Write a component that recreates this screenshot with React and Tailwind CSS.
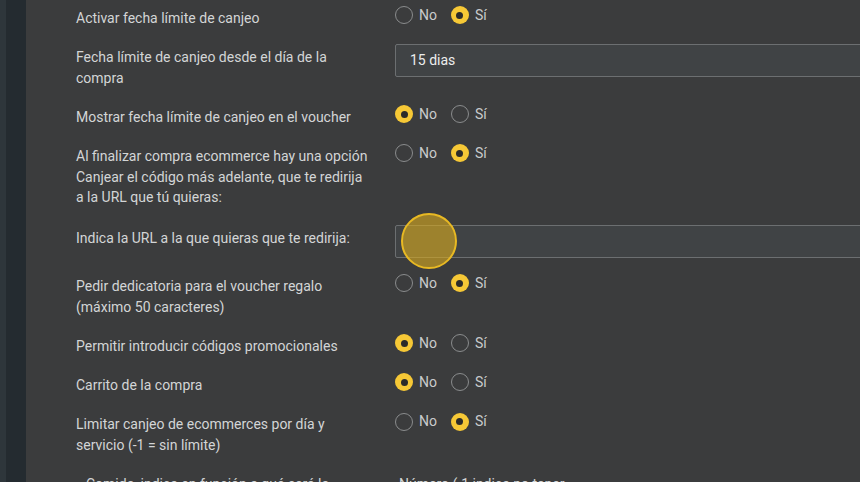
import React from "react";

function Radio({ checked }) {
  if (checked) {
    return (
      <span className="flex h-[18px] w-[18px] items-center justify-center rounded-full bg-[#f6c836]">
        <span className="h-[7px] w-[7px] rounded-full bg-[#2b2b2a]" />
      </span>
    );
  }
  return <span className="h-[18px] w-[18px] rounded-full border-[1.5px] border-[#8a8c8d]" />;
}

function YesNo({ value }) {
  return (
    <div className="flex h-[20.5px] items-center gap-[14px] text-[14px] text-[#c9cbcc]">
      <label className="flex items-center gap-[6px]">
        <Radio checked={value === "no"} />
        <span>No</span>
      </label>
      <label className="flex items-center gap-[6px]">
        <Radio checked={value === "si"} />
        <span>Sí</span>
      </label>
    </div>
  );
}

function TextInput({ value }) {
  return (
    <div className="flex h-[33px] w-[480px] items-center rounded-[2px] border border-[#6c6f71] bg-[#404345] px-[14px] text-[14px] text-[#eceded]">
      {value}
    </div>
  );
}

function Row({ label, children, className = "" }) {
  return (
    <div className={"flex items-start " + className}>
      <div className="relative top-[1px] w-[296px] shrink-0 pt-[2px] leading-[20.5px] text-[#d3d5d6]">{label}</div>
      <div className="ml-[23px] shrink-0">{children}</div>
    </div>
  );
}

const rows = [
  { label: "Activar fecha límite de canjeo", radio: "si" },
  { label: "Fecha límite de canjeo desde el día de la compra", input: "15 dias" },
  { label: "Mostrar fecha límite de canjeo en el voucher", radio: "no" },
  {
    label: "Al finalizar compra ecommerce hay una opción Canjear el código más adelante, que te redirija a la URL que tú quieras:",
    radio: "si",
  },
  { label: "Indica la URL a la que quieras que te redirija:", input: "", cls: "mt-[2px] mb-[-2px]" },
  { label: "Pedir dedicatoria para el voucher regalo (máximo 50 caracteres)", radio: "si" },
  { label: "Permitir introducir códigos promocionales", radio: "no" },
  { label: "Carrito de la compra", radio: "no" },
  { label: "Limitar canjeo de ecommerces por día y servicio (-1 = sin límite)", radio: "si" },
];

export default function App() {
  return (
    <div
      className="flex h-[482px] w-[860px] overflow-hidden bg-[#3b3c3d] text-[14px]"
      style={{ fontFamily: "Roboto, 'Liberation Sans', sans-serif" }}
    >
      <div className="w-[6px] shrink-0 bg-[#2e363b]" />
      <div className="w-[20px] shrink-0 bg-[#242b30]" />
      <div className="relative flex-1">
        <div className="flex flex-col gap-[16.75px] pl-[50px] pt-[4.75px]">
          {rows.map((r, i) => (
            <Row key={i} label={r.label} className={r.cls || ""}>
              {r.input !== undefined ? <TextInput value={r.input} /> : <YesNo value={r.radio} />}
            </Row>
          ))}
          <div className="flex items-start">
            <div className="relative top-[1px] w-[296px] shrink-0 pl-[10px] pt-[2px] leading-[20.5px] text-[#d3d5d6]">
              Comida, indica en función a qué será la
            </div>
            <div className="relative top-[1px] ml-[23px] pl-[4px] pt-[2px] leading-[20.5px] text-[#d3d5d6]">
              Número (-1 indica no tener
            </div>
          </div>
        </div>
        {/* click highlight */}
        <div className="absolute left-[375px] top-[213px] h-[56px] w-[56px] rounded-full border-2 border-[#e8b923] bg-[rgba(214,170,30,0.62)]" />
      </div>
    </div>
  );
}
